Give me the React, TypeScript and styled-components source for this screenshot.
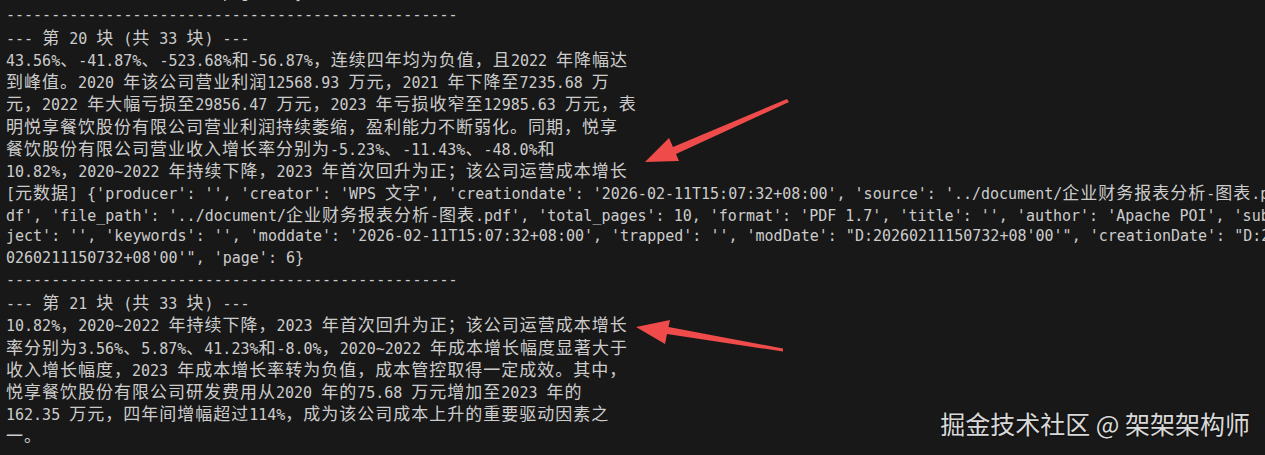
import React from "react";
import styled, { createGlobalStyle } from "styled-components";

const GlobalStyle = createGlobalStyle`
  html, body { margin: 0; padding: 0; background: #181818; }
`;

const Screen = styled.div`
  position: relative;
  width: 1265px;
  height: 455px;
  overflow: hidden;
  background: #181818;
`;

const Terminal = styled.div`
  display: flex;
  flex-direction: column;
  margin-top: -18px;
  padding-left: 6px;
  font-family: "DejaVu Sans Mono", "Liberation Mono", monospace;
  font-size: 15px;
  color: #cccccc;
`;

const Row = styled.div`
  height: 22.1px;
  line-height: 22.1px;
  white-space: pre;
`;

const Wide = styled.span`
  font-family: "Noto Sans CJK SC", "Noto Sans CJK JP", sans-serif;
  font-size: 17px;
  letter-spacing: 1px;
`;

const Arrows = styled.svg`
  position: absolute;
  left: 0;
  top: 0;
  pointer-events: none;
`;

const Watermark = styled.div`
  position: absolute;
  right: 15px;
  top: 407px;
  font-family: "Noto Sans CJK SC", sans-serif;
  font-size: 25px;
  line-height: 32px;
  color: #d9d9d9;
  text-shadow: 0 0 2px rgba(0, 0, 0, 0.6);
  white-space: pre;
`;

const DASHES = "-".repeat(50);

const lines: string[] = [
  "0260211150732+08'00'\", 'page': 5}",
  DASHES,
  "--- 第 20 块 (共 33 块) ---",
  "43.56%、-41.87%、-523.68%和-56.87%，连续四年均为负值，且2022 年降幅达",
  "到峰值。2020 年该公司营业利润12568.93 万元，2021 年下降至7235.68 万",
  "元，2022 年大幅亏损至29856.47 万元，2023 年亏损收窄至12985.63 万元，表",
  "明悦享餐饮股份有限公司营业利润持续萎缩，盈利能力不断弱化。同期，悦享",
  "餐饮股份有限公司营业收入增长率分别为-5.23%、-11.43%、-48.0%和",
  "10.82%，2020~2022 年持续下降，2023 年首次回升为正；该公司运营成本增长",
  "[元数据] {'producer': '', 'creator': 'WPS 文字', 'creationdate': '2026-02-11T15:07:32+08:00', 'source': '../document/企业财务报表分析-图表.p",
  "df', 'file_path': '../document/企业财务报表分析-图表.pdf', 'total_pages': 10, 'format': 'PDF 1.7', 'title': '', 'author': 'Apache POI', 'sub",
  "ject': '', 'keywords': '', 'moddate': '2026-02-11T15:07:32+08:00', 'trapped': '', 'modDate': \"D:20260211150732+08'00'\", 'creationDate': \"D:2",
  "0260211150732+08'00'\", 'page': 6}",
  DASHES,
  "--- 第 21 块 (共 33 块) ---",
  "10.82%，2020~2022 年持续下降，2023 年首次回升为正；该公司运营成本增长",
  "率分别为3.56%、5.87%、41.23%和-8.0%，2020~2022 年成本增长幅度显著大于",
  "收入增长幅度，2023 年成本增长率转为负值，成本管控取得一定成效。其中，",
  "悦享餐饮股份有限公司研发费用从2020 年的75.68 万元增加至2023 年的",
  "162.35 万元，四年间增幅超过114%，成为该公司成本上升的重要驱动因素之",
  "一。",
];

const WIDE_RE = /([\u3000-\u303f\u4e00-\u9fff\uff00-\uffef]+)/;

function renderLine(text: string) {
  return text.split(WIDE_RE).map((part, i) =>
    i % 2 === 1 ? <Wide key={i}>{part}</Wide> : part
  );
}

export default function App() {
  return (
    <>
      <GlobalStyle />
      <Screen>
        <Terminal>
          {lines.map((l, i) => (
            <Row key={i}>{renderLine(l)}</Row>
          ))}
        </Terminal>
        <Arrows width={1265} height={455} viewBox="0 0 1265 455">
          <polygon
            fill="#ef4b4b"
            points="645,162 669,138 673,147 787,99 789,102 676,154 679,161"
          />
          <polygon
            fill="#ef4b4b"
            points="636,327 670,320 668.5,327 783,348.5 783,351.5 667,334 665,344"
          />
        </Arrows>
        <Watermark>掘金技术社区 @ 架架架构师</Watermark>
      </Screen>
    </>
  );
}
